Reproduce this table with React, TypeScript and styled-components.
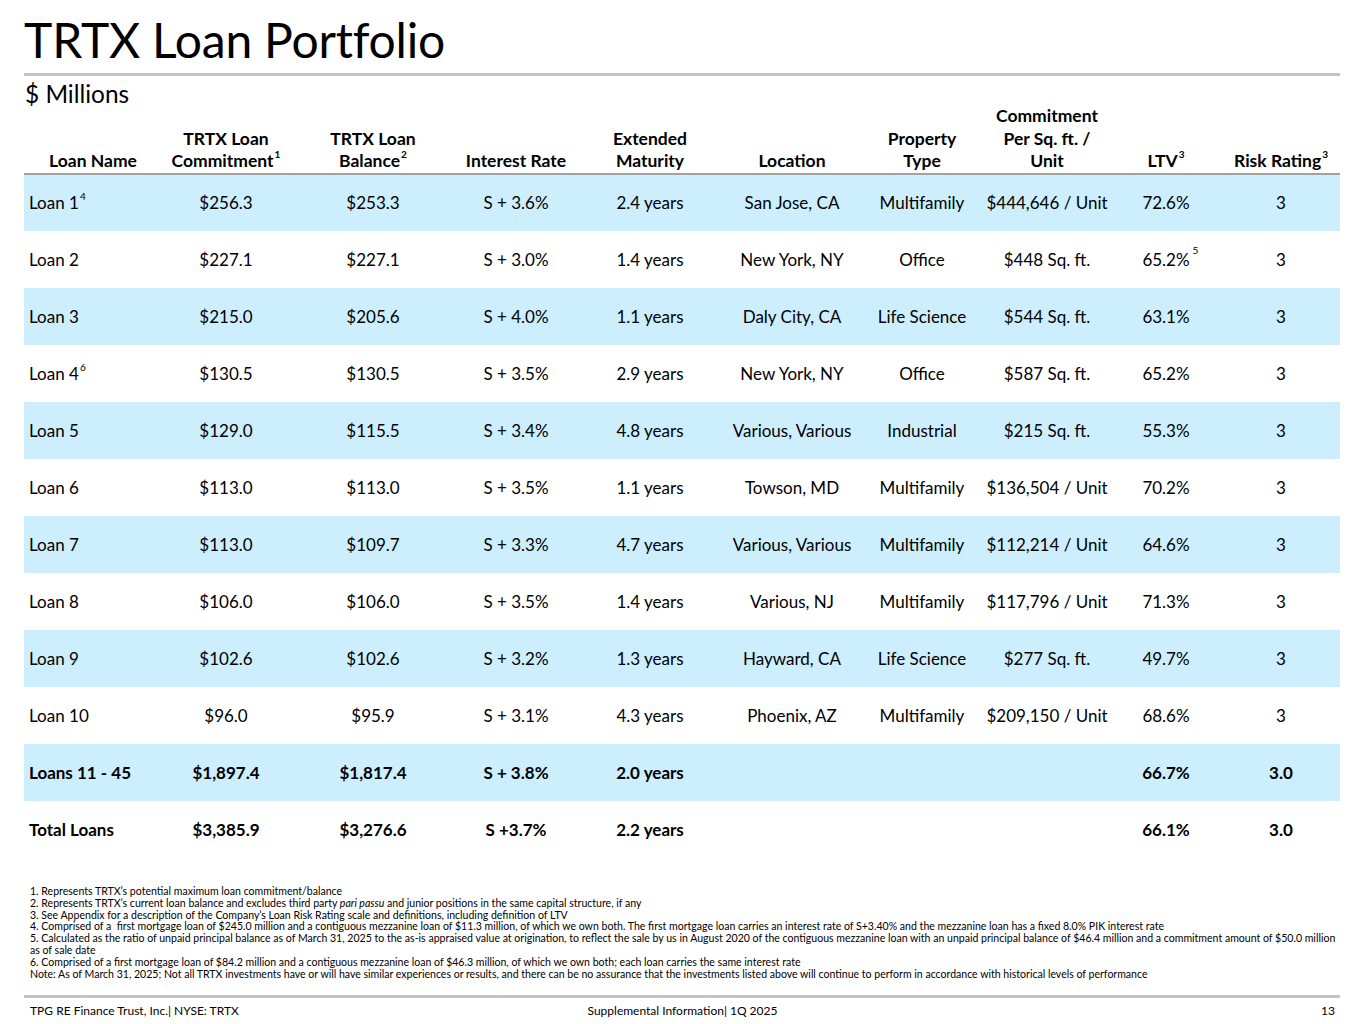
import React from "react";
import styled, { createGlobalStyle } from "styled-components";

const GlobalStyle = createGlobalStyle`
  html, body {
    margin: 0;
    padding: 0;
    background: #ffffff;
  }
  body {
    font-family: Lato, "Open Sans", "Liberation Sans", sans-serif;
    color: #000000;
  }
`;

const Page = styled.div`
  width: 1365px;
  height: 1024px;
  box-sizing: border-box;
  padding: 0 25px 0 24px;
  display: flex;
  flex-direction: column;
  overflow: hidden;
`;

const Title = styled.h1`
  margin: 0;
  padding-top: 13px;
  font-size: 48px;
  font-weight: 400;
  line-height: 54px;
  letter-spacing: -0.2px;
`;

const Rule = styled.div<{ $top?: number }>`
  height: 3px;
  background: #c3c3c3;
  margin-top: ${(p) => p.$top ?? 0}px;
`;

const Subtitle = styled.div`
  font-size: 24.4px;
  line-height: 23px;
  margin-top: 6px;
  padding-left: 1px;
`;

const Table = styled.table`
  width: 1316px;
  border-collapse: collapse;
  table-layout: fixed;
  font-size: 17px;
`;

const Th = styled.th`
  font-size: 17.5px;
  font-weight: 700;
  text-align: center;
  vertical-align: bottom;
  line-height: 22.5px;
  padding: 0;
  border-bottom: 2px solid #a2a2a2;
  white-space: nowrap;
`;

const Row = styled.tr<{ $shade?: boolean; $bold?: boolean }>`
  height: 57px;
  background: ${(p) => (p.$shade ? "#cceeff" : "#ffffff")};
  font-weight: ${(p) => (p.$bold ? 700 : 400)};
`;

const Td = styled.td<{ $left?: boolean }>`
  text-align: ${(p) => (p.$left ? "left" : "center")};
  padding: 0 0 0 ${(p) => (p.$left ? "5px" : "0")};
  white-space: nowrap;
  vertical-align: middle;
`;

const Sup = styled.sup`
  font-size: 10px;
  line-height: 0;
  vertical-align: 9px;
  margin-left: 1px;
`;

const Anchor = styled.span`
  position: relative;
`;

const FloatSup = styled.sup`
  position: absolute;
  left: 100%;
  top: -4px;
  margin-left: 3px;
  font-size: 10px;
  line-height: 1;
`;

const Notes = styled.div`
  margin-top: auto;
  padding-left: 6px;
  font-size: 10.55px;
  line-height: 11.9px;
  white-space: nowrap;
`;

const Note = styled.div``;

const Footer = styled.div`
  display: grid;
  grid-template-columns: 1fr auto 1fr;
  align-items: center;
  font-size: 12px;
  height: 24px;
  padding: 0 5px 2px 6px;
`;

const FootRight = styled.div`
  text-align: right;
`;

type Loan = {
  name: string;
  sup?: string;
  commitment: string;
  balance: string;
  rate: string;
  maturity: string;
  location: string;
  type: string;
  perUnit: string;
  ltv: string;
  ltvSup?: string;
  risk: string;
  bold?: boolean;
};

const loans: Loan[] = [
  { name: "Loan 1", sup: "4", commitment: "$256.3", balance: "$253.3", rate: "S + 3.6%", maturity: "2.4 years", location: "San Jose, CA", type: "Multifamily", perUnit: "$444,646 / Unit", ltv: "72.6%", risk: "3" },
  { name: "Loan 2", commitment: "$227.1", balance: "$227.1", rate: "S + 3.0%", maturity: "1.4 years", location: "New York, NY", type: "Office", perUnit: "$448 Sq. ft.", ltv: "65.2%", ltvSup: "5", risk: "3" },
  { name: "Loan 3", commitment: "$215.0", balance: "$205.6", rate: "S + 4.0%", maturity: "1.1 years", location: "Daly City, CA", type: "Life Science", perUnit: "$544 Sq. ft.", ltv: "63.1%", risk: "3" },
  { name: "Loan 4", sup: "6", commitment: "$130.5", balance: "$130.5", rate: "S + 3.5%", maturity: "2.9 years", location: "New York, NY", type: "Office", perUnit: "$587 Sq. ft.", ltv: "65.2%", risk: "3" },
  { name: "Loan 5", commitment: "$129.0", balance: "$115.5", rate: "S + 3.4%", maturity: "4.8 years", location: "Various, Various", type: "Industrial", perUnit: "$215 Sq. ft.", ltv: "55.3%", risk: "3" },
  { name: "Loan 6", commitment: "$113.0", balance: "$113.0", rate: "S + 3.5%", maturity: "1.1 years", location: "Towson, MD", type: "Multifamily", perUnit: "$136,504 / Unit", ltv: "70.2%", risk: "3" },
  { name: "Loan 7", commitment: "$113.0", balance: "$109.7", rate: "S + 3.3%", maturity: "4.7 years", location: "Various, Various", type: "Multifamily", perUnit: "$112,214 / Unit", ltv: "64.6%", risk: "3" },
  { name: "Loan 8", commitment: "$106.0", balance: "$106.0", rate: "S + 3.5%", maturity: "1.4 years", location: "Various, NJ", type: "Multifamily", perUnit: "$117,796 / Unit", ltv: "71.3%", risk: "3" },
  { name: "Loan 9", commitment: "$102.6", balance: "$102.6", rate: "S + 3.2%", maturity: "1.3 years", location: "Hayward, CA", type: "Life Science", perUnit: "$277 Sq. ft.", ltv: "49.7%", risk: "3" },
  { name: "Loan 10", commitment: "$96.0", balance: "$95.9", rate: "S + 3.1%", maturity: "4.3 years", location: "Phoenix, AZ", type: "Multifamily", perUnit: "$209,150 / Unit", ltv: "68.6%", risk: "3" },
  { name: "Loans 11 - 45", commitment: "$1,897.4", balance: "$1,817.4", rate: "S + 3.8%", maturity: "2.0 years", location: "", type: "", perUnit: "", ltv: "66.7%", risk: "3.0", bold: true },
  { name: "Total Loans", commitment: "$3,385.9", balance: "$3,276.6", rate: "S +3.7%", maturity: "2.2 years", location: "", type: "", perUnit: "", ltv: "66.1%", risk: "3.0", bold: true },
];

const widths = [138, 128, 166, 120, 148, 136, 124, 126, 112, 118];

export default function App() {
  return (
    <>
      <GlobalStyle />
      <Page>
        <Title>TRTX Loan Portfolio</Title>
        <Rule $top={6} />
        <Subtitle>$ Millions</Subtitle>
        <Table>
          <colgroup>
            {widths.map((w, i) => (
              <col key={i} style={{ width: w }} />
            ))}
          </colgroup>
          <thead>
            <tr>
              <Th>Loan Name</Th>
              <Th>
                TRTX Loan
                <br />
                Commitment<Sup>1</Sup>
              </Th>
              <Th>
                TRTX Loan
                <br />
                Balance<Sup>2</Sup>
              </Th>
              <Th>Interest Rate</Th>
              <Th>
                Extended
                <br />
                Maturity
              </Th>
              <Th>Location</Th>
              <Th>
                Property
                <br />
                Type
              </Th>
              <Th>
                Commitment
                <br />
                Per Sq. ft. /
                <br />
                Unit
              </Th>
              <Th>
                LTV<Sup>3</Sup>
              </Th>
              <Th>
                Risk Rating<Sup>3</Sup>
              </Th>
            </tr>
          </thead>
          <tbody>
            {loans.map((l, i) => (
              <Row key={l.name} $shade={i % 2 === 0} $bold={l.bold}>
                <Td $left>
                  {l.name}
                  {l.sup && <Sup>{l.sup}</Sup>}
                </Td>
                <Td>{l.commitment}</Td>
                <Td>{l.balance}</Td>
                <Td>{l.rate}</Td>
                <Td>{l.maturity}</Td>
                <Td>{l.location}</Td>
                <Td>{l.type}</Td>
                <Td>{l.perUnit}</Td>
                <Td>
                  <Anchor>
                    {l.ltv}
                    {l.ltvSup && <FloatSup>{l.ltvSup}</FloatSup>}
                  </Anchor>
                </Td>
                <Td>{l.risk}</Td>
              </Row>
            ))}
          </tbody>
        </Table>
        <Notes>
          <Note>1. Represents TRTX’s potential maximum loan commitment/balance</Note>
          <Note>
            2. Represents TRTX’s current loan balance and excludes third party <i>pari passu</i> and junior positions in the same capital structure, if any
          </Note>
          <Note>3. See Appendix for a description of the Company’s Loan Risk Rating scale and definitions, including definition of LTV</Note>
          <Note>
            4. Comprised of a &nbsp;first mortgage loan of $245.0 million and a contiguous mezzanine loan of $11.3 million, of which we own both. The first mortgage loan carries an interest rate of S+3.40% and the mezzanine loan has a fixed 8.0% PIK interest rate
          </Note>
          <Note>
            5. Calculated as the ratio of unpaid principal balance as of March 31, 2025 to the as-is appraised value at origination, to reflect the sale by us in August 2020 of the contiguous mezzanine loan with an unpaid principal balance of $46.4 million and a commitment amount of $50.0 million
            <br />
            as of sale date
          </Note>
          <Note>
            6. Comprised of a first mortgage loan of $84.2 million and a contiguous mezzanine loan of $46.3 million, of which we own both; each loan carries the same interest rate
          </Note>
          <Note>
            Note: As of March 31, 2025; Not all TRTX investments have or will have similar experiences or results, and there can be no assurance that the investments listed above will continue to perform in accordance with historical levels of performance
          </Note>
        </Notes>
        <Rule $top={14} />
        <Footer>
          <div>TPG RE Finance Trust, Inc.| NYSE: TRTX</div>
          <div>Supplemental Information| 1Q 2025</div>
          <FootRight>13</FootRight>
        </Footer>
      </Page>
    </>
  );
}
